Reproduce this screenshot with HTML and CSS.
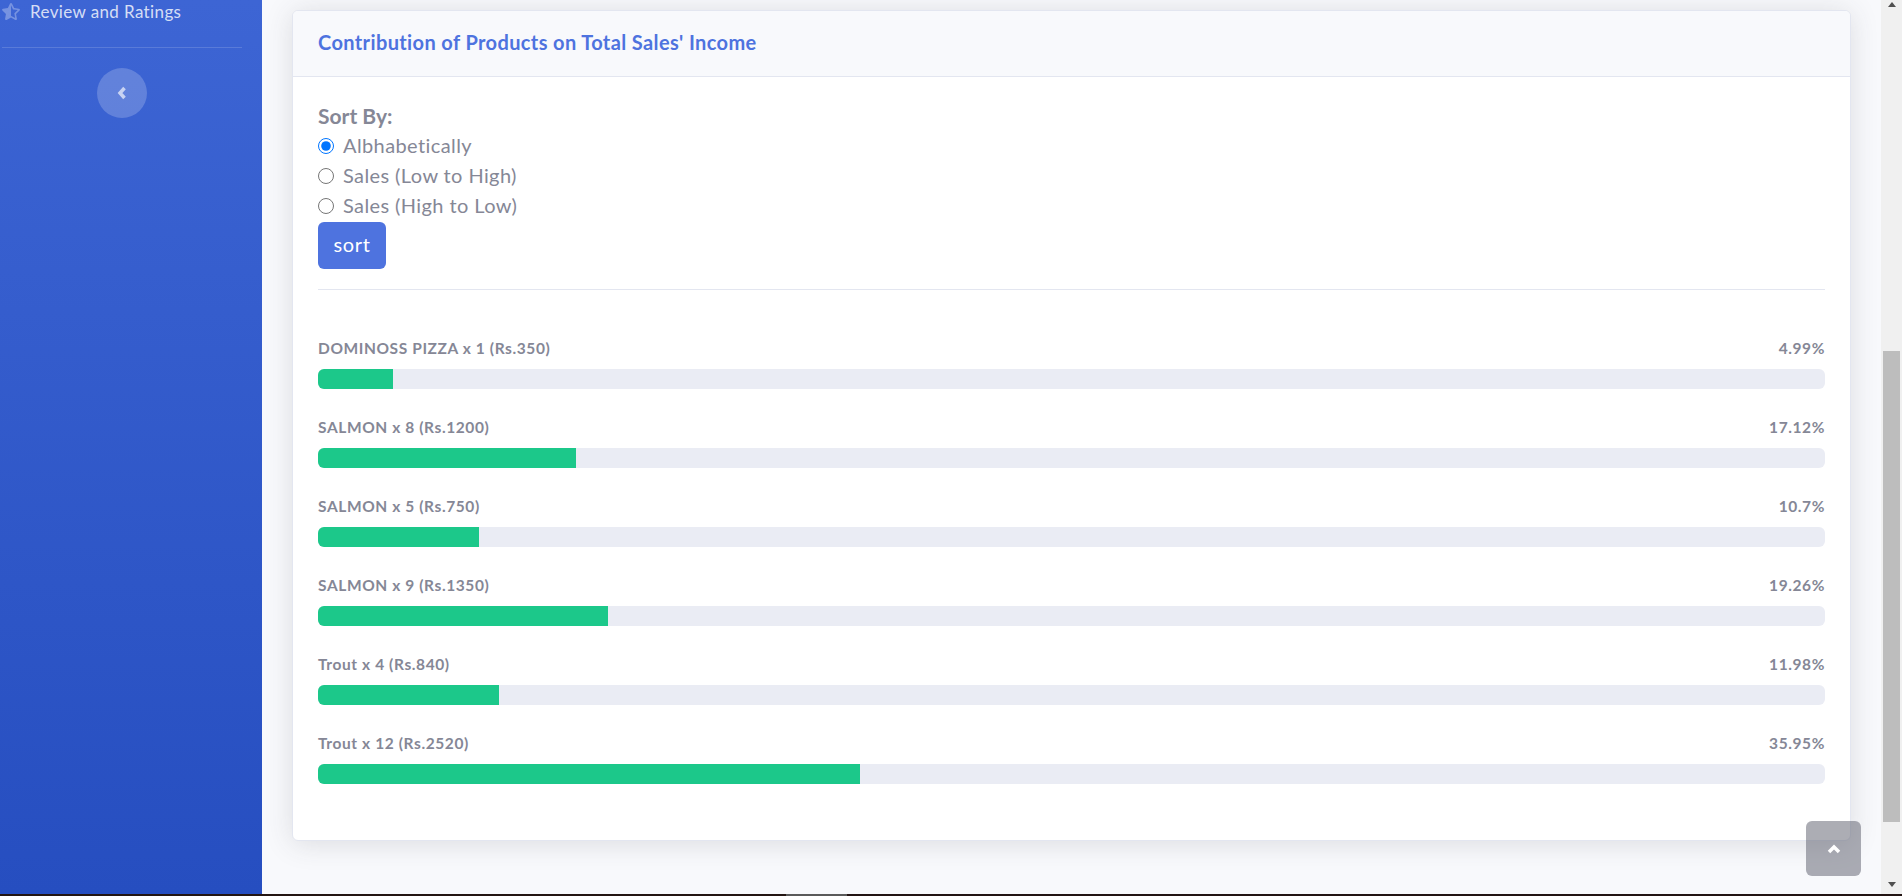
FILE: index.html
```html
<!DOCTYPE html>
<html lang="en">
<head>
<meta charset="utf-8">
<title>Contribution of Products</title>
<link rel="stylesheet" href="styles.css">
</head>
<body>
<div class="screen">
  <div class="app">
    <aside class="sidebar">
      <div class="side-inner">
        <a class="nav-item" href="#">
          <svg class="star" viewBox="0 0 536 512" aria-hidden="true"><path d="M508.55 171.51L362.18 150.2 296.77 17.81C290.89 5.98 279.42 0 267.95 0c-11.4 0-22.79 5.9-28.69 17.81l-65.43 132.38-146.38 21.29c-26.25 3.8-36.77 36.09-17.74 54.59l105.89 103-25.06 145.48C86.98 495.33 103.57 512 122.15 512c4.93 0 10-1.17 14.87-3.75l130.95-68.68 130.94 68.7c4.86 2.55 9.92 3.71 14.83 3.71 18.6 0 35.22-16.61 31.66-37.4l-25.03-145.49 105.91-102.98c19.04-18.5 8.52-50.8-17.73-54.6zm-121.74 123.2l-18.12 17.62 4.28 24.88 19.52 113.45-102.13-53.59-22.38-11.74.03-317.19 51.03 103.29 11.18 22.63 25.01 3.64 114.23 16.63-82.65 80.38z"/></svg>
          <span>Review and Ratings</span>
        </a>
        <div class="side-divider"></div>
        <button class="toggle" type="button" aria-label="Collapse sidebar">
          <svg viewBox="0 0 10 14" aria-hidden="true"><path d="M7.5 2 L3 7 L7.5 12"/></svg>
        </button>
      </div>
    </aside>
    <main class="main">
      <section class="card">
        <header class="card-header"><h6>Contribution of Products on Total Sales' Income</h6></header>
        <div class="card-body">
          <form class="sort-form">
            <div class="sort-title">Sort By:</div>
            <label class="radio"><input type="radio" name="sort" checked><span>Albhabetically</span></label>
            <label class="radio"><input type="radio" name="sort"><span>Sales (Low to High)</span></label>
            <label class="radio"><input type="radio" name="sort"><span>Sales (High to Low)</span></label>
            <button class="sort-btn" type="button">sort</button>
          </form>
          <hr class="rule">
          <div class="bars">
            <div class="bar-row"><div class="bar-label"><span>DOMINOSS PIZZA x 1 (Rs.350)</span><span>4.99%</span></div><div class="track"><div class="fill" style="width:4.99%"></div></div></div>
            <div class="bar-row"><div class="bar-label"><span>SALMON x 8 (Rs.1200)</span><span>17.12%</span></div><div class="track"><div class="fill" style="width:17.12%"></div></div></div>
            <div class="bar-row"><div class="bar-label"><span>SALMON x 5 (Rs.750)</span><span>10.7%</span></div><div class="track"><div class="fill" style="width:10.7%"></div></div></div>
            <div class="bar-row"><div class="bar-label"><span>SALMON x 9 (Rs.1350)</span><span>19.26%</span></div><div class="track"><div class="fill" style="width:19.26%"></div></div></div>
            <div class="bar-row"><div class="bar-label"><span>Trout x 4 (Rs.840)</span><span>11.98%</span></div><div class="track"><div class="fill" style="width:11.98%"></div></div></div>
            <div class="bar-row"><div class="bar-label"><span>Trout x 12 (Rs.2520)</span><span>35.95%</span></div><div class="track"><div class="fill" style="width:35.95%"></div></div></div>
          </div>
        </div>
      </section>
      <a class="scroll-top" href="#" aria-label="Scroll to top">
        <svg viewBox="0 0 14 10" aria-hidden="true"><path d="M2 8 L7 3 L12 8"/></svg>
      </a>
    </main>
    <div class="scrollbar">
      <div class="arrow-up"></div>
      <div class="thumb"></div>
      <div class="arrow-down"></div>
    </div>
  </div>
  <div class="strip"><i class="seg-a"></i><i class="seg-b"></i><i class="seg-c"></i></div>
</div>
</body>
</html>
```
FILE: styles.css
```css
* { box-sizing: border-box; }
html, body { margin: 0; height: 100%; overflow: hidden; }
body { font-family: "Lato", "Noto Sans", sans-serif; font-variant-ligatures: none; color: #858796; background: #f8f9fc; }

.screen { height: 896px; display: flex; flex-direction: column; }
.app { flex: 1; display: flex; min-height: 0; }

.sidebar { width: 262px; flex: none; padding-left: 2px; background: linear-gradient(180deg, #3d65d4, #264ec0); }
.side-inner { width: 240px; display: flex; flex-direction: column; align-items: center; }
.nav-item { align-self: stretch; height: 24px; padding-bottom: 2px; display: flex; align-items: center; gap: 10px; color: rgba(255,255,255,.8); font-size: 17px; letter-spacing: .38px; text-decoration: none; }
.star { width: 18px; height: 17px; fill: rgba(255,255,255,.3); flex: none; }
.side-divider { align-self: stretch; height: 1px; margin-top: 23px; background: rgba(255,255,255,.15); }
.toggle { width: 50px; height: 50px; margin-top: 20px; padding: 0; border: 0; border-radius: 50%; background: rgba(255,255,255,.2); display: flex; align-items: center; justify-content: center; }
.toggle svg { width: 10px; height: 14px; fill: none; stroke: rgba(255,255,255,.65); stroke-width: 3.5; }

.main { flex: 1; min-width: 0; position: relative; padding: 10px 30px 0; overflow: hidden; }
.card { height: 831px; background: #fff; border: 1px solid #e3e6f0; border-radius: 6px; box-shadow: 0 2.4px 28px rgba(58,59,69,.15); }
.card-header { height: 66px; padding: 0 25px 4px; display: flex; align-items: center; background: #f8f9fc; border-bottom: 1px solid #e3e6f0; border-radius: 5px 5px 0 0; }
.card-header h6 { margin: 0; font-size: 20px; font-weight: 700; letter-spacing: .38px; color: #4e73df; }
.card-body { padding: 24px 25px 0; }

.sort-form { display: flex; flex-direction: column; align-items: flex-start; }
.sort-title { font-size: 21px; font-weight: 700; line-height: 30px; }
.radio { height: 30px; padding-bottom: 2px; display: flex; align-items: center; gap: 9px; font-size: 20px; letter-spacing: .4px; }
.radio input { width: 16px; height: 16px; margin: 0; flex: none; position: relative; top: 1px; }
.sort-btn { width: 68px; height: 47px; margin-top: 1px; padding: 0 0 4px; border: 0; border-radius: 6px; background: #4e73df; color: #fff; font: inherit; font-size: 20px; letter-spacing: .6px; }
.rule { margin: 20px 0 0; border: 0; border-top: 1px solid #e3e6f0; }

.bars { padding-top: 45px; display: flex; flex-direction: column; gap: 25px; }
.bar-label { height: 20px; margin-bottom: 14px; padding-top: 6px; display: flex; justify-content: space-between; align-items: center; font-size: 15.5px; font-weight: 700; letter-spacing: .6px; }
.track { height: 20px; border-radius: 6px; background: #eaecf4; overflow: hidden; }
.fill { height: 100%; background: #1cc88a; }

.scroll-top { position: absolute; left: 1544px; top: 821px; width: 55px; height: 55px; border-radius: 6px; background: rgba(90,92,105,.5); display: flex; align-items: center; justify-content: center; }
.scroll-top svg { width: 14px; height: 10px; fill: none; stroke: #fff; stroke-width: 3.5; }

.scrollbar { width: 21px; flex: none; background: #f0f0f0; display: flex; flex-direction: column; align-items: flex-end; padding: 2px 2px 0 2px; }
.arrow-up, .arrow-down { width: 0; height: 0; border-left: 4.5px solid transparent; border-right: 4.5px solid transparent; margin-right: 4px; }
.arrow-up { border-bottom: 5px solid #505050; }
.arrow-down { border-top: 5px solid #505050; margin-top: 60px; }
.thumb { width: 17px; height: 471px; margin-top: 344px; background: #bdbdbd; }

.strip { height: 2px; flex: none; display: flex; }
.strip i { display: block; height: 100%; }
.seg-a { width: 786px; background: #231512; }
.seg-b { width: 61px; background: #5a5a5a; }
.seg-c { flex: 1; background: #221413; }
```
